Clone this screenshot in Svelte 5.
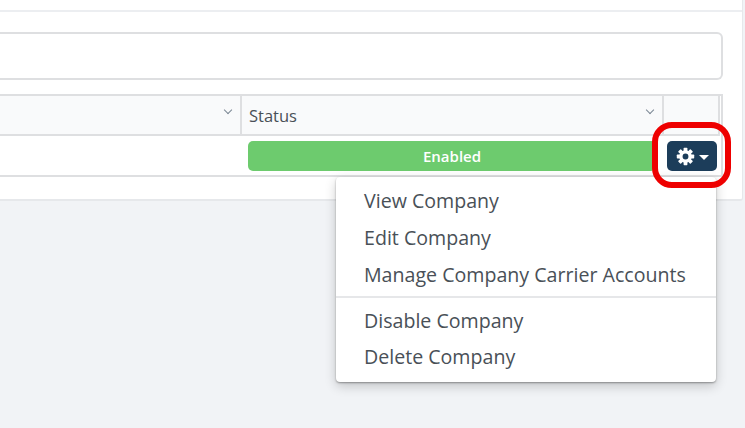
<script>
  const menuTop = ['View Company', 'Edit Company', 'Manage Company Carrier Accounts']
  const menuBottom = ['Disable Company', 'Delete Company']
  const teeth = [0, 45, 90, 135, 180, 225, 270, 315]
</script>

<div class="page">
  <div class="card">
    <div class="topline"></div>
    <div class="searchbox"></div>
    <div class="grid">
      <div class="head first"><span class="chev"></span></div>
      <div class="head status">Status<span class="chev"></span></div>
      <div class="head last"></div>
      <div class="cell"></div>
      <div class="cell pillcell"><div class="pill">Enabled</div></div>
      <div class="cell actions">
        <button class="gearbtn" aria-label="Actions">
          <svg class="gear" viewBox="0 0 24 24">
            {#each teeth as deg}
              <rect x="9.6" y="1" width="4.8" height="6" rx="0.8" fill="#fff" transform="rotate({deg} 12 12)" />
            {/each}
            <circle cx="12" cy="12" r="5.8" fill="none" stroke="#fff" stroke-width="4.2" />
          </svg>
          <span class="caret"></span>
        </button>
      </div>
    </div>
  </div>

  <div class="menu">
    {#each menuTop as item}
      <div class="item">{item}</div>
    {/each}
    <div class="divider"></div>
    {#each menuBottom as item}
      <div class="item lower">{item}</div>
    {/each}
  </div>
  <div class="ring"></div>
</div>

<style>
  :global(body) {
    margin: 0;
    background: #f1f3f6;
  }
  .page {
    position: relative;
    width: 745px;
    height: 428px;
    overflow: hidden;
    font-family: "Open Sans", "Liberation Sans", sans-serif;
    color: #495057;
  }
  .card {
    width: 743px;
    height: 201px;
    box-sizing: border-box;
    padding-top: 10px;
    background: #fff;
    border-right: 1px solid #e6e8eb;
    border-bottom: 2px solid #e6e8eb;
    border-bottom-right-radius: 3px;
  }
  .topline {
    height: 2px;
    background: #eceef1;
  }
  .searchbox {
    width: 723px;
    height: 48px;
    box-sizing: border-box;
    margin-top: 20px;
    background: #fff;
    border: 2px solid #dedfe1;
    border-left: 0;
    border-radius: 0 6px 6px 0;
  }
  .grid {
    display: grid;
    grid-template-columns: 242px 422px 56px;
    grid-template-rows: 40px 39px;
    margin-top: 14px;
    width: 723px;
    box-sizing: border-box;
    border-top: 2px solid #dedfe1;
    border-right: 2px solid #dedfe1;
    border-bottom: 2px solid #dedfe1;
  }
  .head {
    position: relative;
    display: flex;
    align-items: center;
    box-sizing: border-box;
    background: #f9fafb;
    border-bottom: 2px solid #dedfe1;
    border-right: 2px solid #dedfe1;
    font-size: 16.5px;
  }
  .status {
    padding-left: 7px;
  }
  .chev {
    position: absolute;
    right: 9px;
    top: 11px;
    width: 6px;
    height: 6px;
    box-sizing: border-box;
    border-right: 1.5px solid #7b8794;
    border-bottom: 1.5px solid #7b8794;
    transform: rotate(45deg);
  }
  .cell {
    background: #fff;
  }
  .pillcell {
    padding: 5px 8px 0 6px;
  }
  .pill {
    height: 30px;
    border-radius: 5px;
    background: #6dcb6e;
    color: #fff;
    font-size: 15px;
    font-weight: 600;
    line-height: 30px;
    text-align: center;
  }
  .actions {
    padding: 5px 0 0 3px;
  }
  .gearbtn {
    display: flex;
    align-items: center;
    justify-content: center;
    gap: 4px;
    width: 50px;
    height: 30px;
    padding: 0;
    border: 0;
    border-radius: 5px;
    background: #1c3d5a;
  }
  .gear {
    width: 19px;
    height: 19px;
  }
  .caret {
    width: 0;
    height: 0;
    margin-top: 2px;
    border-left: 5.5px solid transparent;
    border-right: 5.5px solid transparent;
    border-top: 5px solid #fff;
  }
  .menu {
    position: absolute;
    left: 336px;
    top: 177px;
    width: 380px;
    height: 205px;
    box-sizing: border-box;
    padding-top: 5px;
    background: #fff;
    border-radius: 4px;
    box-shadow: 0 1px 2px rgba(0, 0, 0, 0.35), 0 4px 12px rgba(0, 0, 0, 0.2);
  }
  .item {
    height: 37px;
    padding-left: 28px;
    font-size: 19.6px;
    line-height: 37px;
    white-space: nowrap;
  }
  .item.lower {
    height: 36px;
    line-height: 36px;
  }
  .divider {
    height: 2px;
    margin: 3px 0 5px;
    background: #e6e7e9;
  }
  .ring {
    position: absolute;
    left: 652px;
    top: 122px;
    width: 79px;
    height: 66px;
    box-sizing: border-box;
    border: 6px solid #ee0000;
    border-radius: 20px;
  }
</style>
